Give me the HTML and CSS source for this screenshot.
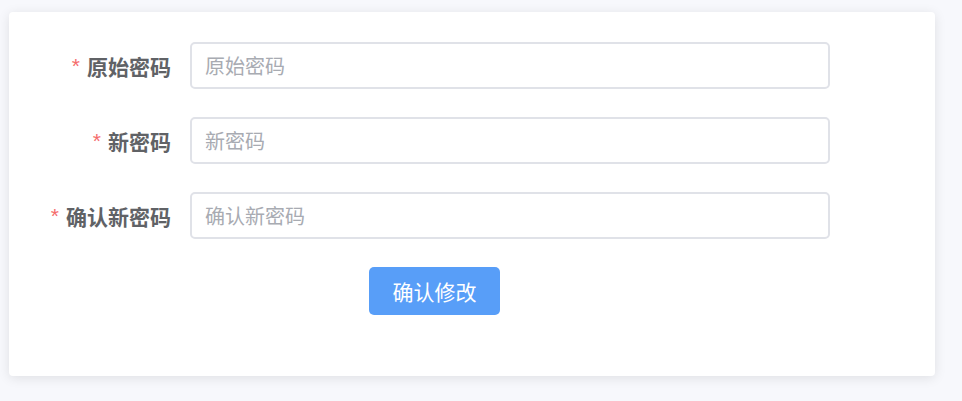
FILE: index.html
```html
<!DOCTYPE html>
<html lang="zh">
<head>
<meta charset="utf-8">
<link rel="stylesheet" href="styles.css">
</head>
<body>
<div class="page">
  <div class="card">
    <form class="form">
      <div class="row">
        <label class="label"><span class="req">*</span>原始密码</label>
        <input class="input" type="password" placeholder="原始密码">
      </div>
      <div class="row">
        <label class="label"><span class="req">*</span>新密码</label>
        <input class="input" type="password" placeholder="新密码">
      </div>
      <div class="row">
        <label class="label"><span class="req">*</span>确认新密码</label>
        <input class="input" type="password" placeholder="确认新密码">
      </div>
      <div class="actions">
        <button type="button" class="btn">确认修改</button>
      </div>
    </form>
  </div>
</div>
</body>
</html>
```
FILE: styles.css
```css
html, body {
  margin: 0;
  padding: 0;
  background: #f7f8fc;
  font-family: "Noto Sans CJK SC", "Noto Sans", sans-serif;
}
.page {
  padding: 12px 27px 25px 9px;
}
.card {
  background: #fff;
  border-radius: 4px;
  height: 364px;
  box-sizing: border-box;
  box-shadow: 0 2px 12px rgba(0, 0, 0, 0.1);
  padding-top: 30px;
}
.row {
  display: flex;
  align-items: center;
  height: 47px;
  margin-bottom: 28px;
}
.label {
  width: 169px;
  height: 47px;
  box-sizing: border-box;
  padding-right: 7px;
  display: flex;
  align-items: center;
  justify-content: flex-end;
  font-size: 21px;
  font-weight: 700;
  color: #606266;
  white-space: nowrap;
}
.req {
  color: #f56c6c;
  font-family: "Liberation Sans", sans-serif;
  font-weight: 400;
  font-size: 21px;
  margin-right: 7px;
}
.input {
  margin-left: 12px;
  width: 640px;
  height: 47px;
  box-sizing: border-box;
  border: 2px solid #e0e2e8;
  border-radius: 5px;
  padding: 0 13px;
  font-family: inherit;
  font-size: 20px;
  color: #606266;
  outline: none;
}
.input::placeholder {
  color: #a8abb2;
}
.actions {
  padding-left: 360px;
}
.btn {
  width: 131px;
  height: 48px;
  background: #589ef8;
  border: none;
  border-radius: 5px;
  color: #fff;
  font-family: inherit;
  font-size: 21px;
  cursor: pointer;
}
```
